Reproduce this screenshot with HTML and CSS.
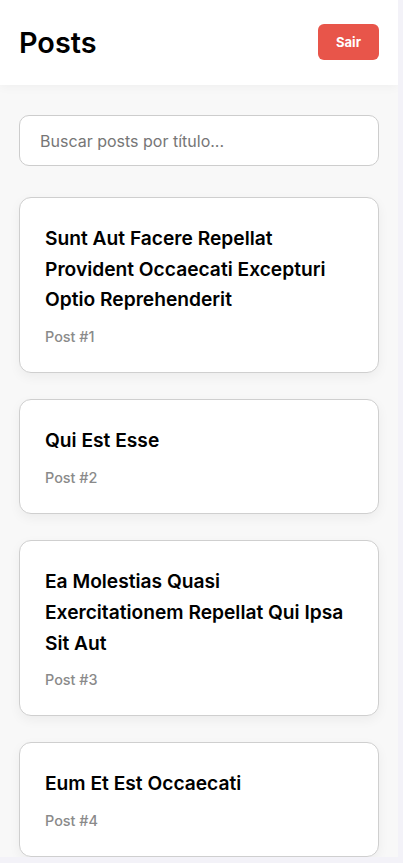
FILE: index.html
```html
<!DOCTYPE html>
<html lang="pt-BR">
<head>
<meta charset="utf-8">
<title>Posts</title>
<link rel="stylesheet" href="styles.css">
</head>
<body>
<div class="app">
  <header class="topbar">
    <h1 class="title">Posts</h1>
    <button class="logout">Sair</button>
  </header>
  <main class="content">
    <input class="search" type="text" placeholder="Buscar posts por título...">
    <div class="list">
      <article class="card">
        <h2 class="card-title">Sunt Aut Facere Repellat Provident Occaecati Excepturi Optio Reprehenderit</h2>
        <p class="card-meta">Post #1</p>
      </article>
      <article class="card">
        <h2 class="card-title">Qui Est Esse</h2>
        <p class="card-meta">Post #2</p>
      </article>
      <article class="card">
        <h2 class="card-title">Ea Molestias Quasi Exercitationem Repellat Qui Ipsa Sit Aut</h2>
        <p class="card-meta">Post #3</p>
      </article>
      <article class="card">
        <h2 class="card-title">Eum Et Est Occaecati</h2>
        <p class="card-meta">Post #4</p>
      </article>
    </div>
  </main>
</div>
</body>
</html>
```
FILE: styles.css
```css
html {
  background: #f3f2f8;
}
body {
  margin: 0;
  font-family: Inter, "Noto Sans", sans-serif;
  color: #000;
}
.app {
  width: 398px;
  height: 857px;
  overflow: hidden;
  background: #f8f8f8;
}
.topbar {
  height: 85px;
  box-sizing: border-box;
  padding: 0 19px;
  background: #fff;
  display: flex;
  align-items: center;
  justify-content: space-between;
  box-shadow: 0 2px 10px rgba(0, 0, 0, 0.04);
  position: relative;
}
.title {
  margin: 0;
  font-size: 28.8px;
  font-weight: 600;
  color: #000;
  padding-bottom: 1px;
}
.logout {
  width: 61px;
  height: 36px;
  border: none;
  border-radius: 6px;
  background: #e8554a;
  color: #fff;
  font-family: Inter, sans-serif;
  font-size: 13px;
  font-weight: 700;
  margin-top: -1px;
}
.content {
  padding: 30px 19px 0;
}
.search {
  display: block;
  width: 360px;
  height: 51px;
  box-sizing: border-box;
  border: 1px solid #cdcdcd;
  border-radius: 10px;
  padding: 0 20px;
  font-family: Inter, sans-serif;
  font-size: 16px;
  background: #fff;
  color: #111;
  outline: none;
}
.search::placeholder {
  color: #767676;
}
.list {
  margin-top: 31px;
  display: flex;
  flex-direction: column;
  gap: 26.5px;
}
.card {
  background: #fff;
  border: 1px solid #cfcfcf;
  border-radius: 12px;
  padding: 25px 25px 24px;
  box-shadow: 0 4px 12px rgba(0, 0, 0, 0.05);
}
.card-title {
  margin: 0;
  font-size: 19.2px;
  font-weight: 600;
  line-height: 30.72px;
  color: #000;
}
.card-meta {
  margin: 11px 0 0;
  font-size: 14.4px;
  line-height: 21.6px;
  font-weight: 500;
  color: #8a8a8a;
}
```
